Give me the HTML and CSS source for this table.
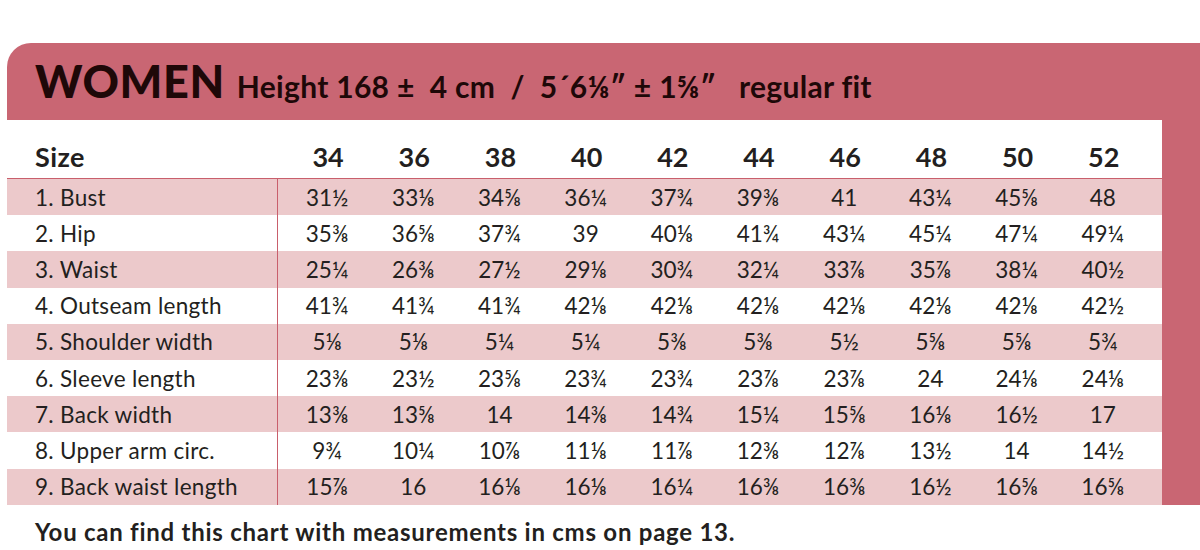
FILE: index.html
```html
<!DOCTYPE html>
<html>
<head>
<meta charset="utf-8">
<link rel="stylesheet" href="styles.css">
</head>
<body>
<div class="sheet">
  <div class="banner">
    <span class="big">WOMEN</span>
    <span class="sub">Height 168 ±&nbsp; 4 cm&nbsp; /&nbsp; 5´6⅛″ ± 1⅝″&nbsp;&nbsp; regular fit</span>
  </div>
  <div class="body">
    <div class="table">
      <div class="row head">
        <div class="label">Size</div>
        <div class="vals"><span>34</span><span>36</span><span>38</span><span>40</span><span>42</span><span>44</span><span>46</span><span>48</span><span>50</span><span>52</span></div>
      </div>
      <div class="row alt">
        <div class="label">1. Bust</div>
        <div class="vals"><span>31½</span><span>33⅛</span><span>34⅝</span><span>36¼</span><span>37¾</span><span>39⅜</span><span>41</span><span>43¼</span><span>45⅝</span><span>48</span></div>
      </div>
      <div class="row">
        <div class="label">2. Hip</div>
        <div class="vals"><span>35⅜</span><span>36⅝</span><span>37¾</span><span>39</span><span>40⅛</span><span>41¾</span><span>43¼</span><span>45¼</span><span>47¼</span><span>49¼</span></div>
      </div>
      <div class="row alt">
        <div class="label">3. Waist</div>
        <div class="vals"><span>25¼</span><span>26⅜</span><span>27½</span><span>29⅛</span><span>30¾</span><span>32¼</span><span>33⅞</span><span>35⅞</span><span>38¼</span><span>40½</span></div>
      </div>
      <div class="row">
        <div class="label">4. Outseam length</div>
        <div class="vals"><span>41¾</span><span>41¾</span><span>41¾</span><span>42⅛</span><span>42⅛</span><span>42⅛</span><span>42⅛</span><span>42⅛</span><span>42⅛</span><span>42½</span></div>
      </div>
      <div class="row alt">
        <div class="label">5. Shoulder width</div>
        <div class="vals"><span>5⅛</span><span>5⅛</span><span>5¼</span><span>5¼</span><span>5⅜</span><span>5⅜</span><span>5½</span><span>5⅝</span><span>5⅝</span><span>5¾</span></div>
      </div>
      <div class="row">
        <div class="label">6. Sleeve length</div>
        <div class="vals"><span>23⅜</span><span>23½</span><span>23⅝</span><span>23¾</span><span>23¾</span><span>23⅞</span><span>23⅞</span><span>24</span><span>24⅛</span><span>24⅛</span></div>
      </div>
      <div class="row alt">
        <div class="label">7. Back width</div>
        <div class="vals"><span>13⅜</span><span>13⅝</span><span>14</span><span>14⅜</span><span>14¾</span><span>15¼</span><span>15⅝</span><span>16⅛</span><span>16½</span><span>17</span></div>
      </div>
      <div class="row">
        <div class="label">8. Upper arm circ.</div>
        <div class="vals"><span>9¾</span><span>10¼</span><span>10⅞</span><span>11⅛</span><span>11⅞</span><span>12⅜</span><span>12⅞</span><span>13½</span><span>14</span><span>14½</span></div>
      </div>
      <div class="row alt">
        <div class="label">9. Back waist length</div>
        <div class="vals"><span>15⅞</span><span>16</span><span>16⅛</span><span>16⅛</span><span>16¼</span><span>16⅜</span><span>16⅜</span><span>16½</span><span>16⅝</span><span>16⅝</span></div>
      </div>
    </div>
    <div class="strip"></div>
  </div>
  <p class="note">You can find this chart with measurements in cms on page 13.</p>
</div>
</body>
</html>
```
FILE: styles.css
```css
html, body {
  margin: 0;
  padding: 0;
  background: #ffffff;
}
body {
  font-family: "Lato", "DejaVu Sans", sans-serif;
  color: #231f20;
  width: 1200px;
  height: 550px;
  overflow: hidden;
}
.sheet {
  margin: 43px 0 0 7px;
  width: 1193px;
}
.banner {
  height: 77px;
  box-sizing: border-box;
  background: #c96673;
  border-top-left-radius: 24px;
  display: flex;
  align-items: baseline;
  padding: 11px 0 0 28px;
  color: #1e0808;
  white-space: nowrap;
}
.big {
  font-size: 45px;
  font-weight: 900;
  letter-spacing: 0.6px;
  margin-right: 12px;
}
.sub {
  font-size: 30px;
  font-weight: 700;
  letter-spacing: 0.3px;
}
.body {
  display: flex;
}
.table {
  width: 1155px;
}
.strip {
  flex: 1;
  background: #c96673;
}
.row {
  display: flex;
  height: 36.2px;
  align-items: stretch;
}
.row.alt {
  background: #ecc9cb;
}
.row.head {
  height: 59px;
  border-bottom: 1px solid #c95f6c;
  box-sizing: border-box;
  font-weight: 700;
}
.label {
  width: 271px;
  box-sizing: border-box;
  padding-left: 28px;
  display: flex;
  align-items: center;
  border-right: 1px solid #c95f6c;
  font-size: 22.5px;
  letter-spacing: 0.3px;
}
.row.head .label {
  border-right: none;
  width: 272px;
  font-size: 27px;
  letter-spacing: 0.4px;
  align-items: flex-end;
  padding-bottom: 5px;
}
.vals {
  display: grid;
  grid-template-columns: repeat(10, 86.2px);
  padding-left: 6px;
  font-size: 22.5px;
}
.vals span {
  display: flex;
  align-items: center;
  justify-content: center;
}
.row.head .vals {
  font-size: 27px;
}
.row.head .vals span {
  align-items: flex-end;
  padding-bottom: 5px;
}
.note {
  margin: 12px 0 0 28px;
  font-size: 24px;
  font-weight: 700;
  letter-spacing: 0.75px;
  color: #231f20;
}
```
